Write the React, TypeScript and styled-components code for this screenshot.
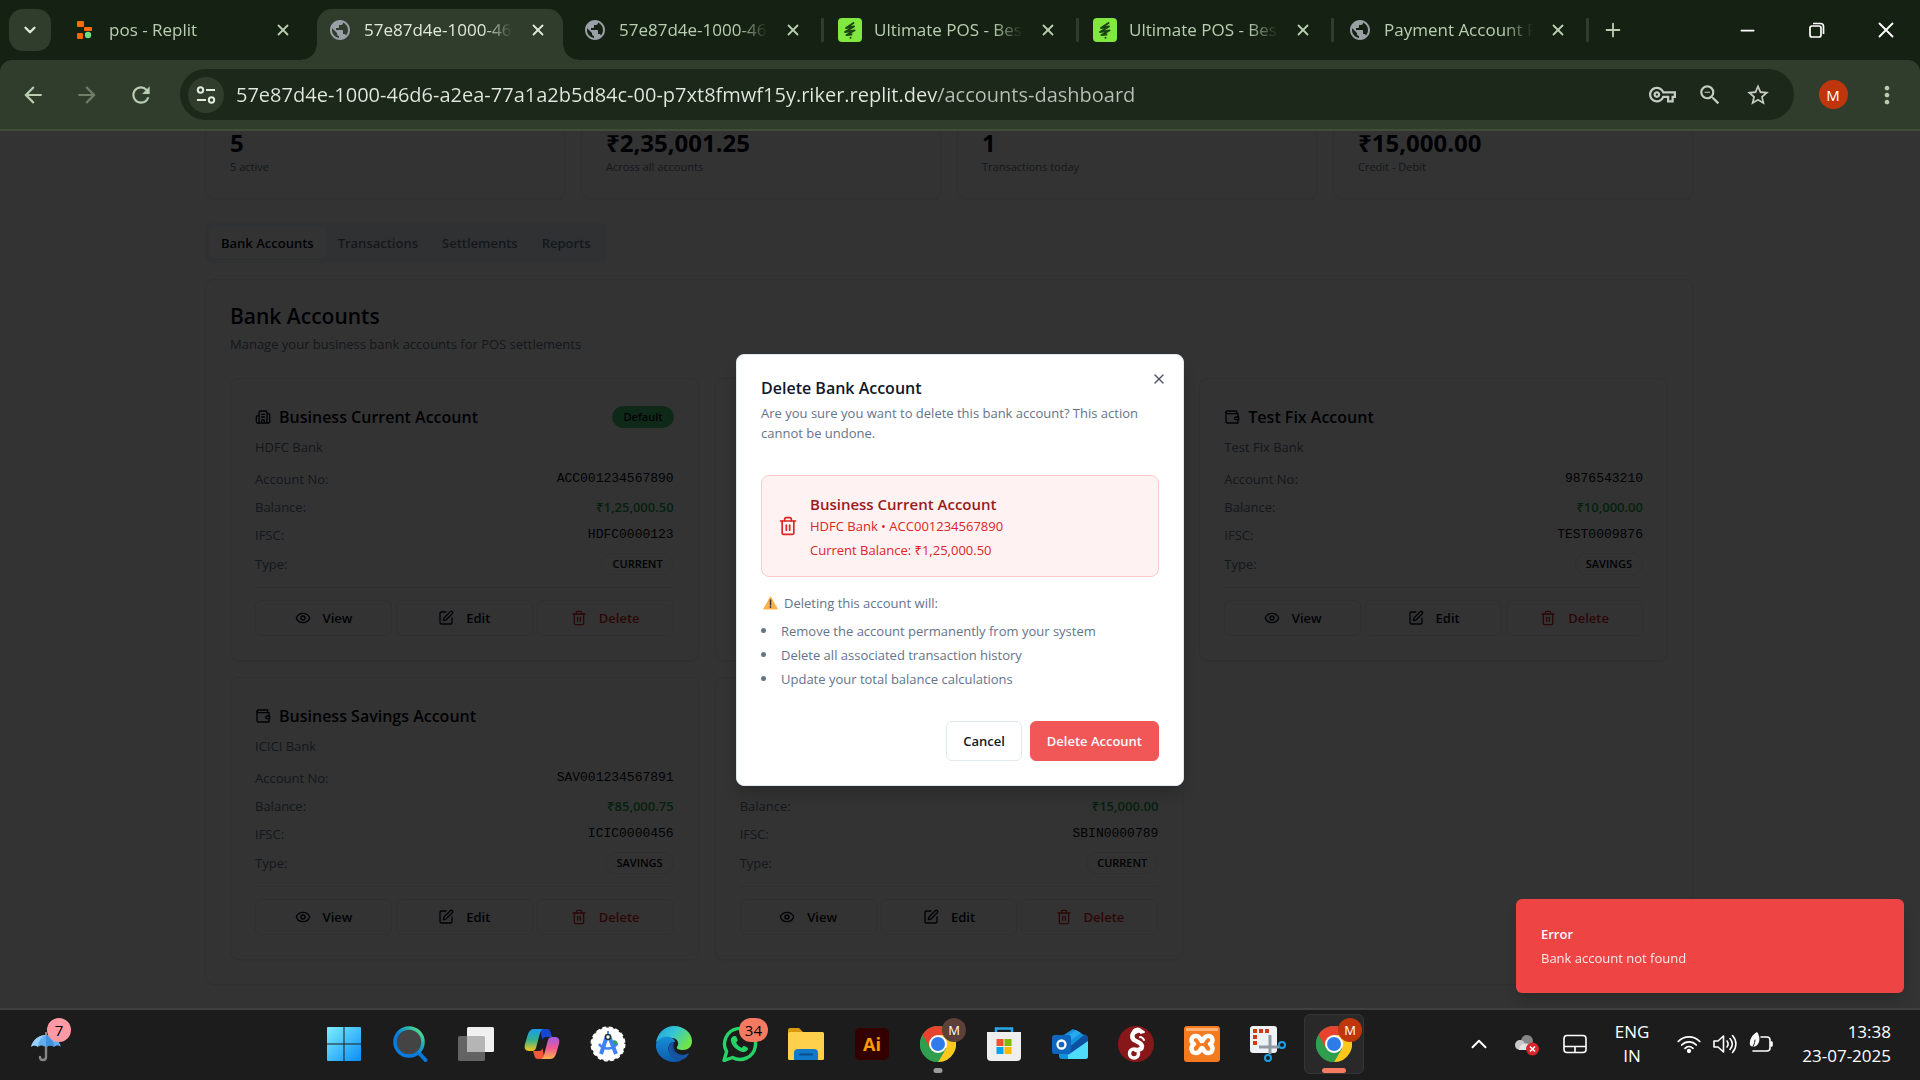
import React from 'react';
import styled, { createGlobalStyle } from 'styled-components';
import { Building2, ChevronDown, ChevronUp, Eye, Minus, Plus, SquarePen, Trash2, X } from 'lucide-react';
import {
  MdArrowBack,
  MdArrowForward,
  MdMoreVert,
  MdOutlineVpnKey,
  MdPublic,
  MdRefresh,
  MdStarBorder,
  MdOutlineZoomOut,
} from 'react-icons/md';

const sans = "'Open Sans', 'Noto Sans', sans-serif";
const mono = "'Liberation Mono', 'DejaVu Sans Mono', monospace";

const GlobalStyle = createGlobalStyle`
  *, *::before, *::after { box-sizing: border-box; }
  body { margin: 0; background: #152213; font-family: ${sans}; }
  h1, h2, h3, p, ul, dl, dd { margin: 0; padding: 0; }
  button { font-family: inherit; padding: 0; border: 0; background: none; cursor: pointer; color: inherit; }
  svg { display: block; flex-shrink: 0; }
`;

const Screen = styled.div`
  display: flex;
  flex-direction: column;
  height: 100vh;
  overflow: hidden;
`;

/* ---------- Browser chrome ---------- */

const TabStrip = styled.header`
  display: flex;
  align-items: center;
  height: 60px;
  flex-shrink: 0;
  padding-left: 9px;
  background: #152213;
  color: #b9ceb1;
`;

const TabSearch = styled.button`
  display: grid;
  place-items: center;
  width: 42px;
  height: 42px;
  margin-right: 11px;
  border-radius: 14px;
  background: #303d2d;
  color: #e3ecdc;
`;

const TabList = styled.div`
  display: flex;
  align-items: center;
  align-self: stretch;
  gap: 3px;
`;

const Tab = styled.div<{ $active?: boolean }>`
  position: relative;
  display: flex;
  align-items: center;
  align-self: flex-end;
  gap: 12px;
  width: 246px;
  height: 51px;
  padding: 0 12px 9px 11px;
  border-radius: 15px 15px 0 0;
  background: ${(p) => (p.$active ? '#303d2d' : 'transparent')};
  color: ${(p) => (p.$active ? '#dfe9d8' : '#b9ceb1')};

  &::before,
  &::after {
    content: ${(p) => (p.$active ? "''" : 'none')};
    position: absolute;
    bottom: 0;
    width: 15px;
    height: 15px;
  }
  &::before {
    right: 100%;
    background: radial-gradient(circle at 0 0, transparent 14px, #303d2d 15px);
  }
  &::after {
    left: 100%;
    background: radial-gradient(circle at 100% 0, transparent 14px, #303d2d 15px);
  }
`;

const TabIcon = styled.span`
  display: grid;
  place-items: center;
  width: 24px;
  height: 24px;
  flex-shrink: 0;
  color: #9aa0a6;
`;

const TabTitle = styled.span`
  flex: 1;
  min-width: 0;
  overflow: hidden;
  white-space: nowrap;
  font-size: 17px;
  line-height: 26px;
  mask-image: linear-gradient(90deg, #000 80%, transparent 100%);
`;

const TabClose = styled.button`
  display: grid;
  place-items: center;
  width: 26px;
  height: 26px;
`;

const TabDivider = styled.span<{ $hidden?: boolean }>`
  width: 3px;
  height: 24px;
  border-radius: 1px;
  background: ${(p) => (p.$hidden ? 'transparent' : '#303d2d')};
`;

const NewTab = styled.button`
  display: grid;
  place-items: center;
  width: 48px;
  height: 42px;
`;

const WindowControls = styled.div`
  display: flex;
  align-self: stretch;
  margin-left: auto;
  color: #fff;
`;

const WindowButton = styled.button`
  display: grid;
  place-items: center;
  width: 69px;
`;

const Toolbar = styled.nav`
  display: flex;
  align-items: center;
  flex-shrink: 0;
  padding: 9px 6px;
  border-bottom: 2px solid #3d4e39;
  border-radius: 12px 12px 0 0;
  background: #303d2d;
  color: #b9ceb1;
`;

const ToolButton = styled.button<{ $dim?: boolean }>`
  display: grid;
  place-items: center;
  width: 54px;
  height: 40px;
  opacity: ${(p) => (p.$dim ? 0.45 : 1)};
`;

const Omnibox = styled.div`
  display: flex;
  align-items: center;
  flex: 1;
  height: 51px;
  margin: 0 12px;
  padding: 0 12px 0 8px;
  border-radius: 26px;
  background: #1c291a;
  color: #c6ccc2;
`;

const SiteInfo = styled.button`
  display: grid;
  place-items: center;
  width: 36px;
  height: 36px;
  margin-right: 12px;
  border-radius: 50%;
  background: #303d2d;
  color: #e3e9de;
`;

const Address = styled.input`
  flex: 1;
  min-width: 0;
  padding: 0;
  border: 0;
  outline: 0;
  font: 20px / 30px ${sans};
  color: #e3e9de;
  background: linear-gradient(90deg, #e3e9de 701px, #b9c0b5 701px);
  background-clip: text;
  -webkit-text-fill-color: transparent;
`;

const OmniButton = styled.button`
  display: grid;
  place-items: center;
  width: 48px;
  height: 40px;
`;

const Avatar = styled.span`
  display: grid;
  place-items: center;
  width: 29px;
  height: 29px;
  border-radius: 50%;
  background: #bf360c;
  color: #fff;
  font-size: 15px;
`;

/* ---------- Dashboard page ---------- */

const Viewport = styled.div`
  position: relative;
  flex: 1;
  min-height: 0;
  overflow: hidden;
  background: #fff;
`;

const Gutter = styled.div`
  padding-right: 22px;
`;

const Page = styled.main`
  max-width: 1536px;
  margin: 0 auto;
  padding: 0 24px;
  color: #020817;
`;

const Stats = styled.section`
  display: grid;
  grid-template-columns: repeat(4, 1fr);
  gap: 16px;
  margin-bottom: 24px;
`;

const StatCard = styled.div`
  padding: 0 24px 23px;
  border: 1px solid #e2e8f0;
  border-top: 0;
  border-radius: 0 0 8px 8px;
  box-shadow: 0 1px 2px rgba(0, 0, 0, 0.05);
`;

const StatValue = styled.p`
  margin-bottom: 4px;
  font-size: 24px;
  line-height: 24px;
  font-weight: 700;
`;

const StatNote = styled.p`
  font-size: 11px;
  line-height: 16px;
  color: #64748b;
`;

const Sections = styled.div`
  display: inline-flex;
  height: 40px;
  margin-bottom: 16px;
  padding: 4px;
  border-radius: 6px;
  background: #f1f5f9;
`;

const SectionTab = styled.button<{ $active?: boolean }>`
  padding: 0 12px;
  border-radius: 4px;
  font-size: 13px;
  font-weight: 600;
  color: ${(p) => (p.$active ? '#020817' : '#64748b')};
  background: ${(p) => (p.$active ? '#fff' : 'transparent')};
  box-shadow: ${(p) => (p.$active ? '0 1px 2px rgba(0, 0, 0, 0.05)' : 'none')};
`;

const Panel = styled.section`
  padding: 24px;
  border: 1px solid #e2e8f0;
  border-radius: 8px;
  box-shadow: 0 1px 2px rgba(0, 0, 0, 0.05);
`;

const PanelHeading = styled.h1`
  margin-bottom: 6px;
  font-size: 21px;
  line-height: 24px;
  font-weight: 600;
`;

const Muted = styled.p`
  font-size: 13px;
  line-height: 20px;
  color: #64748b;
`;

const Accounts = styled.div`
  display: grid;
  grid-template-columns: repeat(3, 1fr);
  gap: 16px;
  margin-top: 24px;
`;

const Card = styled.article`
  padding: 24px;
  border: 1px solid #e2e8f0;
  border-radius: 8px;
  box-shadow: 0 1px 2px rgba(0, 0, 0, 0.05);
`;

const CardTop = styled.div`
  display: flex;
  align-items: center;
  justify-content: space-between;
  margin-bottom: 6px;
`;

const CardTitle = styled.h2`
  display: flex;
  align-items: center;
  gap: 8px;
  font-size: 16px;
  line-height: 28px;
  font-weight: 600;
`;

const Badge = styled.span<{ $solid?: boolean }>`
  padding: 0 10px;
  border: 1px solid ${(p) => (p.$solid ? '#4ecb7c' : '#e2e8f0')};
  border-radius: 11px;
  background: ${(p) => (p.$solid ? '#4ecb7c' : 'transparent')};
  color: #020817;
  font-size: 11px;
  line-height: 20px;
  font-weight: 600;
`;

const Facts = styled.dl`
  display: grid;
  gap: 8px;
  margin-top: 12px;
  padding-bottom: 12px;
  border-bottom: 1px solid #e2e8f0;
`;

const Fact = styled.div`
  display: flex;
  align-items: center;
  justify-content: space-between;
  font-size: 13px;
  line-height: 20px;
`;

const FactName = styled.dt`
  color: #64748b;
`;

const Code = styled.dd`
  font-family: ${mono};
`;

const Money = styled.dd`
  color: #16a34a;
  font-weight: 600;
`;

const Kind = styled.dd`
  display: flex;
`;

const Actions = styled.div`
  display: flex;
  gap: 4px;
  margin-top: 12px;
`;

const Action = styled.button<{ $danger?: boolean }>`
  display: flex;
  align-items: center;
  justify-content: center;
  gap: 12px;
  flex: 1;
  height: 36px;
  border: 1px solid #e2e8f0;
  border-radius: 6px;
  font-size: 13px;
  font-weight: 600;
  color: ${(p) => (p.$danger ? '#dc2626' : '#020817')};
`;

/* ---------- Dialog and toast ---------- */

const Overlay = styled.div`
  position: absolute;
  inset: 0;
  display: grid;
  place-items: center;
  background: rgba(0, 0, 0, 0.8);
`;

const Dialog = styled.section`
  position: relative;
  width: 448px;
  padding: 24px;
  border: 1px solid #e2e8f0;
  border-radius: 8px;
  background: #fff;
  box-shadow: 0 10px 15px -3px rgba(0, 0, 0, 0.2);
  color: #64748b;
`;

const DialogTitle = styled.h2`
  margin-bottom: 6px;
  font-size: 16px;
  line-height: 18px;
  font-weight: 600;
  color: #0f172a;
`;

const DialogClose = styled.button`
  position: absolute;
  top: 16px;
  right: 16px;
  color: #4b5566;
`;

const Target = styled.div`
  display: flex;
  align-items: center;
  gap: 12px;
  margin: 32px 0 16px;
  padding: 16px;
  border: 1px solid #fecaca;
  border-radius: 8px;
  background: #fef2f2;
  color: #dc2626;
  font-size: 13px;
  line-height: 20px;
`;

const TargetName = styled.h3`
  font-size: 15px;
  line-height: 24px;
  font-weight: 600;
  color: #991b1b;
`;

const TargetBalance = styled.p`
  margin-top: 4px;
`;

const Warning = styled.p`
  display: flex;
  align-items: center;
  gap: 6px;
  padding-left: 2px;
  font-size: 13px;
  line-height: 20px;
`;

const Effects = styled.ul`
  display: grid;
  gap: 4px;
  margin-top: 8px;
  list-style: none;
  font-size: 13px;
  line-height: 20px;
`;

const Effect = styled.li`
  display: flex;
  align-items: center;
  gap: 15px;
  &::before {
    content: '';
    width: 5px;
    height: 5px;
    border-radius: 50%;
    background: currentColor;
  }
`;

const DialogFooter = styled.footer`
  display: flex;
  justify-content: flex-end;
  gap: 8px;
  margin-top: 32px;
`;

const DialogButton = styled.button<{ $danger?: boolean }>`
  height: 40px;
  padding: 0 16px;
  border: 1px solid ${(p) => (p.$danger ? '#f15757' : '#e2e8f0')};
  border-radius: 6px;
  background: ${(p) => (p.$danger ? '#f15757' : '#fff')};
  color: ${(p) => (p.$danger ? '#f8fafc' : '#0f172a')};
  font-size: 13px;
  font-weight: 600;
`;

const Toast = styled.aside`
  position: absolute;
  right: 16px;
  bottom: 15px;
  width: 388px;
  padding: 25px;
  border-radius: 6px;
  background: #ef4444;
  color: #f8fafc;
  box-shadow: 0 10px 15px -3px rgba(0, 0, 0, 0.2);
  font-size: 13px;
  line-height: 20px;
`;

const ToastTitle = styled.h3`
  margin-bottom: 4px;
  font-size: 13px;
  line-height: 20px;
  font-weight: 600;
`;

const ToastText = styled.p`
  opacity: 0.9;
`;

/* ---------- Taskbar ---------- */

const Taskbar = styled.footer`
  display: flex;
  flex-shrink: 0;
  height: 72px;
  padding-bottom: 2px;
  border-top: 2px solid #404040;
  background: #1c1c1c;
  color: #fff;
`;

const WeatherSlot = styled.div`
  display: flex;
  flex: 0 1 311px;
  padding-left: 22px;
`;

const AppButton = styled.button`
  position: relative;
  display: grid;
  place-items: center;
  width: 66px;
  height: 68px;
`;

const WeatherButton = styled(AppButton)`
  width: 48px;
`;

const ActiveTile = styled.span`
  position: absolute;
  inset: 4px 3px;
  border: 1px solid #353535;
  border-radius: 6px;
  background: #292929;
`;

const Glyph = styled.span`
  position: relative;
`;

const RunMark = styled.span<{ $active?: boolean }>`
  position: absolute;
  bottom: 5px;
  left: 50%;
  width: ${(p) => (p.$active ? '24px' : '9px')};
  height: 5px;
  border-radius: 3px;
  transform: translateX(-50%);
  background: ${(p) => (p.$active ? '#f47b62' : '#9a9a9a')};
`;

const Count = styled.span<{ $tone: string; $dark?: boolean; $wide?: boolean }>`
  position: absolute;
  top: -8px;
  right: -10px;
  min-width: 24px;
  height: 24px;
  padding: 0 ${(p) => (p.$wide ? '6px' : '0')};
  border-radius: 12px;
  background: ${(p) => p.$tone};
  color: ${(p) => (p.$dark ? '#fff' : '#000')};
  font-size: ${(p) => (p.$dark ? '13px' : '15px')};
  line-height: 24px;
  text-align: center;
`;

const Tray = styled.div`
  display: flex;
  margin-left: auto;
`;

const TrayButton = styled.button<{ $width: number }>`
  display: flex;
  align-items: center;
  justify-content: center;
  gap: 12px;
  width: ${(p) => p.$width}px;
  font-size: 17px;
  line-height: 24px;
`;

const Clock = styled.button`
  width: 135px;
  padding-right: 29px;
  text-align: right;
  white-space: nowrap;
  font-size: 17px;
  line-height: 24px;
`;

/* ---------- Drawings ---------- */

const WalletIcon = () => (
  <svg width="16" height="16" viewBox="0 0 24 24" fill="none" stroke="currentColor" strokeWidth="2" strokeLinecap="round" strokeLinejoin="round">
    <path d="M21 12V7H5a2 2 0 0 1 0-4h14v4" />
    <path d="M3 5v14a2 2 0 0 0 2 2h16v-5" />
    <path d="M18 12a2 2 0 0 0 0 4h4v-4Z" />
  </svg>
);

const ReplitLogo = () => (
  <svg width="18" height="18" viewBox="0 0 18 18">
    <rect x="1" y="0" width="7" height="6" rx="1" fill="#ff6b0a" />
    <rect x="8" y="6" width="8" height="4" rx="1" fill="#ff6b0a" />
    <rect x="1" y="12" width="6" height="6" rx="1" fill="#f60" />
    <circle cx="12" cy="14" r="3.2" fill="#6ddc82" />
  </svg>
);

const UltimateLogo = () => (
  <svg width="24" height="24" viewBox="0 0 24 24">
    <rect width="24" height="24" rx="4" fill="#82e83f" />
    <path d="M15.500 5 8 10l8-1.500L7 14l9.500-1.500L8.500 17l5-.5" fill="none" stroke="#1c4313" strokeWidth="2" strokeLinecap="round" strokeLinejoin="round" />
    <circle cx="12.500" cy="19.800" r="1" fill="#1c4313" />
  </svg>
);

const SiteSettingsIcon = () => (
  <svg width="22" height="22" viewBox="0 0 22 22" fill="none" stroke="currentColor" strokeWidth="2">
    <circle cx="5.500" cy="6" r="2.700" />
    <path d="M11 6h9M2 16h9" />
    <circle cx="16.500" cy="16" r="2.700" />
  </svg>
);

const RestoreIcon = () => (
  <svg width="16" height="16" viewBox="0 0 16 16" fill="none" stroke="currentColor" strokeWidth="1.700">
    <rect x="1" y="4" width="11" height="11" rx="2" />
    <path d="M4 1.500h7.500a3 3 0 0 1 3 3V12" />
  </svg>
);

const WarningIcon = () => (
  <svg width="15" height="14" viewBox="0 0 15 14">
    <path d="M7.500.8 14.300 13H.7z" fill="#ffb04d" stroke="#ffb04d" strokeLinejoin="round" />
    <path d="M7.500 4v5" stroke="#3b3440" strokeWidth="1.500" strokeLinecap="round" />
    <circle cx="7.500" cy="11" r=".9" fill="#3b3440" />
  </svg>
);

const Umbrella = () => (
  <svg width="30" height="36" viewBox="0 0 30 36">
    <path d="M15 17v14c0 4-6 4-6 0" fill="none" stroke="#858585" strokeWidth="2.400" strokeLinecap="round" />
    <path d="M0 21C2 13 8 9 15 9s13 4 15 12c-2-2-5-2-7 0-2-2-5-2-8 0-3-2-6-2-8 0-2-2-5-2-7 0z" fill="#62aef0" />
    <path d="M7 21c0-5 3-10 8-12-6 0-13 4-15 12 2-2 5-2 7 0z" fill="#9bd0fb" />
    <path d="M15 21c0-5 0-9 0-12 5 2 8 7 8 12-2-2-5-2-8 0z" fill="#3f92e2" />
    <path d="M15 6v3" stroke="#858585" strokeWidth="2" />
  </svg>
);

const StartLogo = () => (
  <svg width="36" height="36" viewBox="0 0 36 36">
    <defs>
      <linearGradient id="start" x1="0" y1="0" x2="1" y2="1">
        <stop offset="0" stopColor="#7deffc" />
        <stop offset="1" stopColor="#0a8df8" />
      </linearGradient>
    </defs>
    <path d="M2 1h15.500v16.500H1V2a1 1 0 0 1 1-1zM18.500 1H34a1 1 0 0 1 1 1v15.500H18.500zM1 18.500h16.500V35H2a1 1 0 0 1-1-1zM18.500 18.500H35V34a1 1 0 0 1-1 1H18.500z" fill="url(#start)" />
  </svg>
);

const SearchLogo = () => (
  <svg width="36" height="36" viewBox="0 0 36 36">
    <defs>
      <linearGradient id="search" x1="0" y1="1" x2="1" y2="0">
        <stop offset=".45" stopColor="#0a7bdc" />
        <stop offset=".7" stopColor="#23b0b5" />
        <stop offset="1" stopColor="#6cf07a" />
      </linearGradient>
    </defs>
    <path d="m26 26 7.500 8" stroke="#0a78d8" strokeWidth="4" strokeLinecap="round" />
    <circle cx="17" cy="16" r="14" fill="#444" stroke="url(#search)" strokeWidth="3.500" />
  </svg>
);

const TaskViewLogo = () => (
  <svg width="38" height="36" viewBox="0 0 38 36">
    <rect x="1" y="10" width="27" height="25" rx="1.500" fill="#636363" />
    <rect x="10" y="1" width="27" height="25" rx="1.500" fill="#f0f0f0" />
    <path d="M10 10h16.500a1.500 1.500 0 0 1 1.500 1.500V26H11.500a1.500 1.500 0 0 1-1.500-1.500z" fill="#b5b5b5" />
  </svg>
);

const CopilotLogo = () => (
  <svg width="36" height="36" viewBox="0 0 36 36">
    <defs>
      <linearGradient id="cpA" x1="0" y1="0" x2="0" y2="1">
        <stop offset="0" stopColor="#1d9bf0" />
        <stop offset=".5" stopColor="#33b28f" />
        <stop offset="1" stopColor="#f5c514" />
      </linearGradient>
      <linearGradient id="cpB" x1="0" y1="0" x2="0" y2="1">
        <stop offset="0" stopColor="#a45bea" />
        <stop offset=".5" stopColor="#ef5a92" />
        <stop offset="1" stopColor="#ffb04c" />
      </linearGradient>
    </defs>
    <path d="M14 3h9c2 0 3 1 3.500 3l1.500 5h-6c-2 0-3 1-3.500 3L16 4z" fill="#1746d1" />
    <path d="M9 25h6c2 0 3-1 3.500-3l2 11H14c-2 0-3-1-3.500-3z" fill="#f4573a" />
    <path d="M10 3h9c-2 1-2.500 2-3 4l-4 15c-.6 2-2 3-4 3H5c-4 0-5-3-4-7L4 8c1-3 3-5 6-5z" fill="url(#cpA)" />
    <path d="M26 33h-9c2-1 2.500-2 3-4l4-15c.6-2 2-3 4-3h3c4 0 5 3 4 7l-3 10c-1 3-3 5-6 5z" fill="url(#cpB)" />
  </svg>
);

const StudioLogo = () => (
  <svg width="36" height="36" viewBox="0 0 36 36">
    <circle cx="18" cy="18" r="16.500" fill="#fff" stroke="#fff" strokeWidth="2" strokeDasharray="4 2.500" />
    <path d="M21 15c4-2 7 0 7 4h-7z" fill="#2f9e57" />
    <path d="m17 10-6 18M19 10l7 18" stroke="#3f82f4" strokeWidth="4" />
    <path d="M9 18c4 6 13 6 18 0" fill="none" stroke="#3f82f4" strokeWidth="2.500" />
    <path d="M18 5v3" stroke="#4c8df6" strokeWidth="2" />
    <circle cx="18" cy="11" r="2.500" fill="#fff" stroke="#263238" strokeWidth="1.600" />
  </svg>
);

const EdgeLogo = () => (
  <svg width="36" height="36" viewBox="0 0 36 36">
    <defs>
      <linearGradient id="edgeTop" x1="0" y1="0" x2="1" y2=".5">
        <stop offset="0" stopColor="#1b9de2" />
        <stop offset=".5" stopColor="#35c6d4" />
        <stop offset="1" stopColor="#6ee34c" />
      </linearGradient>
      <linearGradient id="edgeLow" x1="0" y1="0" x2="0" y2="1">
        <stop offset="0" stopColor="#198fd9" />
        <stop offset="1" stopColor="#0c5cae" />
      </linearGradient>
    </defs>
    <path d="M0 17C1 7 9 0 18 0c10 0 18 7 18 15 0 6-4 9-9 9-4 0-7-1-6-3 3-4 0-9-5-9C9 11 3 13 0 17z" fill="url(#edgeTop)" />
    <path d="M0 18c2-6 9-9 14-7 3 1 5 3 5 5-5-1-8 5-6 10 2 6 8 9 14 8-3 1-6 2-9 2C8 36-1 28 0 18z" fill="url(#edgeLow)" />
    <path d="M17 16c-6 3-5 11 1 15 5 3 11 2 15-4-5 3-11 2-14-2-2-3-2-6-1-8z" fill="#124f9c" />
    <path d="M13 26c2 7 9 10 15 7 2-1 4-3 5-6-5 3-11 4-15 0-2-3-3-7-1-11-4 1-5 6-4 10z" fill="#1456a4" />
  </svg>
);

const WhatsAppLogo = () => (
  <svg width="36" height="36" viewBox="0 0 36 36">
    <path d="M2 34.500 4.600 25.700A15.500 15.500 0 1 1 10.500 31.500z" fill="none" stroke="#25d366" strokeWidth="3.400" strokeLinejoin="round" />
    <path d="M12.500 10c1 0 1.500 0 2 1l1.200 3c.3.8-1.200 2-1.600 2.600 1.200 2.500 3 4.200 5.700 5.300.7-.6 1.700-2.300 2.500-2l3 1.500c.8.400.8.800.6 1.700-.6 2.400-3 3.300-5 3-6-1.100-11-6-12-11-.4-2.600 1.300-5.100 3.600-5.100z" fill="#25d366" />
  </svg>
);

const FolderLogo = () => (
  <svg width="36" height="36" viewBox="0 0 36 36">
    <path d="M0 4a2 2 0 0 1 2-2h9l4 4v6H0z" fill="#d99a10" />
    <rect y="6" width="36" height="28" rx="1.500" fill="#ffd04c" />
    <path d="M6 34V27a4 4 0 0 1 4-4h16a4 4 0 0 1 4 4v7z" fill="#1279c9" />
    <path d="M12 28.500h12" stroke="#0a4d8c" strokeWidth="2" strokeLinecap="round" />
  </svg>
);

const AiTile = styled.span`
  display: grid;
  place-items: center;
  width: 34px;
  height: 32px;
  border-radius: 5px;
  background: #330000;
  color: #ff9a00;
  font-size: 18px;
  line-height: 32px;
  font-weight: 700;
`;

const ChromeLogo = () => (
  <svg width="36" height="36" viewBox="0 0 36 36">
    <circle cx="18" cy="18" r="18" fill="#2f9e4f" />
    <path d="M18 18 2.400 9A18 18 0 0 1 33.600 9z" fill="#e8432f" />
    <path d="M18 9h15.600A18 18 0 0 1 18 36l8-13.500z" fill="#fcc81c" />
    <path d="M2.400 9 10.200 22.500 18 18V9z" fill="#e8432f" />
    <path d="M2.400 9A18 18 0 0 0 18 36l7.800-13.500L18 18l-7.800 4.500z" fill="#2f9e4f" />
    <circle cx="18" cy="18" r="9" fill="#fff" />
    <circle cx="18" cy="18" r="7" fill="#2f7bea" />
  </svg>
);

const StoreLogo = () => (
  <svg width="36" height="36" viewBox="0 0 36 36">
    <path d="M10 8V2.500h16V8" fill="none" stroke="#29a9e8" strokeWidth="2.500" />
    <path d="M1 6h34v25a4 4 0 0 1-4 4H5a4 4 0 0 1-4-4z" fill="#eee" />
    <path fill="#f05133" d="M10.500 13h7v7h-7z" />
    <path fill="#7fba00" d="M18.500 13h7v7h-7z" />
    <path fill="#00a4ef" d="M10.500 21h7v7h-7z" />
    <path fill="#ffb900" d="M18.500 21h7v7h-7z" />
  </svg>
);

const OutlookLogo = () => (
  <svg width="36" height="36" viewBox="0 0 36 36">
    <path d="M7 12 21 3l15 8v19a3 3 0 0 1-3 3H10a3 3 0 0 1-3-3z" fill="#1592dc" />
    <path d="M10 14 24 4l5 3-17 12z" fill="#2aa8ee" />
    <path d="M14 24 33 8l3 3v5L20 27z" fill="#0f4fa2" />
    <path d="m36 15-20 14v4h17a3 3 0 0 0 3-3z" fill="#4fdcfa" />
    <rect y="9" width="19" height="19" rx="2.500" fill="#0e66bd" />
    <circle cx="9.500" cy="18.500" r="4" fill="none" stroke="#fff" strokeWidth="2.300" />
  </svg>
);

const WireGuardLogo = () => (
  <svg width="36" height="36" viewBox="0 0 36 36">
    <circle cx="18" cy="18" r="18" fill="#88171a" />
    <path d="M15 5c2-3 6-3 8-1l3 2-4 1" fill="#fff" stroke="#fff" strokeWidth="2" strokeLinejoin="round" />
    <path d="M19 5c-5 1-6 6-3 9 3 2 7 2 8 6 0 3-3 4-6 4" fill="none" stroke="#fff" strokeWidth="4.500" strokeLinecap="round" />
    <circle cx="16" cy="27.500" r="4.500" fill="none" stroke="#fff" strokeWidth="3.500" />
    <path d="M22 11c2 0 3 1 4 3" fill="none" stroke="#fff" strokeWidth="2" strokeLinecap="round" />
  </svg>
);

const XamppLogo = () => (
  <svg width="36" height="36" viewBox="0 0 36 36">
    <rect width="36" height="36" rx="3" fill="#f47a20" />
    <path d="M2 2h32v3H2z" fill="#fbb077" />
    <path d="M12 10c5 0 4 5 6 5s1-5 6-5 6 6 2 8c4 3 3 9-2 9s-4-5-6-5-1 5-6 5-6-6-2-9c-4-2-3-8 2-8z" fill="none" stroke="#fff" strokeWidth="4.500" strokeLinejoin="round" />
  </svg>
);

const SnipLogo = () => (
  <svg width="36" height="36" viewBox="0 0 36 36">
    <rect width="27" height="27" rx="3" fill="#eef2f6" />
    <path d="M3 5h17" stroke="#d13a12" strokeWidth="4" strokeDasharray="4 2" />
    <path d="M5 9v12" stroke="#d13a12" strokeWidth="4" strokeDasharray="4 2" />
    <path d="M20 9v19M9 21h20" stroke="#9199a3" strokeWidth="3" />
    <circle cx="32" cy="19" r="3" fill="none" stroke="#1ca0ea" strokeWidth="2" />
    <circle cx="18" cy="32" r="3" fill="none" stroke="#1ca0ea" strokeWidth="2" />
  </svg>
);

const CloudOff = () => (
  <svg width="24" height="24" viewBox="0 0 24 24">
    <circle cx="12" cy="9" r="6" fill="#868686" />
    <circle cx="5" cy="13" r="5" fill="#c9c9c9" />
    <path d="M4 18c0-6 8-9 13-4v4z" fill="#e4e4e4" />
    <circle cx="17.500" cy="17" r="6.500" fill="#d9252b" />
    <path d="m15 14.500 5 5m0-5-5 5" stroke="#fff" strokeWidth="1.600" />
  </svg>
);

const Touchpad = () => (
  <svg width="24" height="24" viewBox="0 0 24 24" fill="none" stroke="#fff" strokeWidth="1.600">
    <rect x="1" y="3.500" width="22" height="17" rx="3" />
    <path d="M1 14.500h22M12 14.500v6" />
  </svg>
);

const Wifi = () => (
  <svg width="24" height="24" viewBox="0 0 24 24" fill="none" stroke="#fff" strokeWidth="1.700" strokeLinecap="round">
    <path d="M1.200 9.500c6-6.300 15.600-6.300 21.600 0M4.700 13c4-4.300 10.600-4.300 14.600 0M8 16.300c2.300-2.300 5.700-2.300 8 0" />
    <circle cx="12" cy="19" r="1.300" fill="#fff" />
  </svg>
);

const Speaker = () => (
  <svg width="24" height="24" viewBox="0 0 24 24" fill="none" stroke="#fff" strokeWidth="1.600" strokeLinecap="round" strokeLinejoin="round">
    <path d="M1 9v6h4l5.500 5V4L5 9z" />
    <path d="M14 9c1.500 2 1.500 4 0 6M17 6.500c3 3.500 3 7.500 0 11M19.500 3.500c4.500 5 4.500 12 0 17" />
  </svg>
);

const Battery = () => (
  <svg width="24" height="24" viewBox="0 0 24 24" fill="none" stroke="#fff" strokeWidth="1.600" strokeLinecap="round">
    <path d="M12 5h6a3 3 0 0 1 3 3v8a3 3 0 0 1-3 3H4" />
    <path d="M22.500 10.500v3" strokeWidth="2.500" />
    <path d="M8 0C3 3 0 8 1 13c2 3 6 2 8-1s2-8-1-12z" fill="#fff" stroke="none" />
    <path d="M6 8c0 4-2 6-4 10" stroke="#1c1c1c" strokeWidth="1" />
  </svg>
);

/* ---------- Data ---------- */

type TabData = { icon: React.ReactNode; title: string; active?: boolean };

const globe = <MdPublic size={24} />;

const browserTabs: TabData[] = [
  { icon: <ReplitLogo />, title: 'pos - Replit' },
  { icon: globe, title: '57e87d4e-1000-46', active: true },
  { icon: globe, title: '57e87d4e-1000-46' },
  { icon: <UltimateLogo />, title: 'Ultimate POS - Bes' },
  { icon: <UltimateLogo />, title: 'Ultimate POS - Bes' },
  { icon: globe, title: 'Payment Account R' },
];

const stats = [
  ['5', '5 active'],
  ['₹2,35,001.25', 'Across all accounts'],
  ['1', 'Transactions today'],
  ['₹15,000.00', 'Credit - Debit'],
];

type Account = {
  name: string;
  bank: string;
  number: string;
  balance: string;
  ifsc: string;
  kind: 'CURRENT' | 'SAVINGS';
  main?: boolean;
};

const accounts: (Account | null)[] = [
  { name: 'Business Current Account', bank: 'HDFC Bank', number: 'ACC001234567890', balance: '₹1,25,000.50', ifsc: 'HDFC0000123', kind: 'CURRENT', main: true },
  null,
  { name: 'Test Fix Account', bank: 'Test Fix Bank', number: '9876543210', balance: '₹10,000.00', ifsc: 'TEST0009876', kind: 'SAVINGS' },
  { name: 'Business Savings Account', bank: 'ICICI Bank', number: 'SAV001234567891', balance: '₹85,000.75', ifsc: 'ICIC0000456', kind: 'SAVINGS' },
  { name: 'Petty Cash', bank: 'State Bank', number: 'CUR001234567892', balance: '₹15,000.00', ifsc: 'SBIN0000789', kind: 'CURRENT' },
];

type AppData = { label: string; logo: React.ReactNode; count?: string; tone?: string; dark?: boolean; run?: boolean; active?: boolean };

const apps: AppData[] = [
  { label: 'Start', logo: <StartLogo /> },
  { label: 'Search', logo: <SearchLogo /> },
  { label: 'Task view', logo: <TaskViewLogo /> },
  { label: 'Copilot', logo: <CopilotLogo /> },
  { label: 'Android Studio', logo: <StudioLogo /> },
  { label: 'Edge', logo: <EdgeLogo /> },
  { label: 'WhatsApp', logo: <WhatsAppLogo />, count: '34', tone: '#f47b62' },
  { label: 'File Explorer', logo: <FolderLogo /> },
  { label: 'Illustrator', logo: <AiTile>Ai</AiTile> },
  { label: 'Chrome', logo: <ChromeLogo />, count: 'M', tone: '#5d4037', dark: true, run: true },
  { label: 'Store', logo: <StoreLogo /> },
  { label: 'Outlook', logo: <OutlookLogo /> },
  { label: 'WireGuard', logo: <WireGuardLogo /> },
  { label: 'XAMPP', logo: <XamppLogo /> },
  { label: 'Snipping Tool', logo: <SnipLogo /> },
  { label: 'Chrome window', logo: <ChromeLogo />, count: 'M', tone: '#bf360c', dark: true, run: true, active: true },
];

/* ---------- Parts ---------- */

const AccountCard = ({ account }: { account: Account }) => (
  <Card>
    <CardTop>
      <CardTitle>
        {account.kind === 'CURRENT' ? <Building2 size={16} /> : <WalletIcon />}
        {account.name}
      </CardTitle>
      {account.main && <Badge $solid>Default</Badge>}
    </CardTop>
    <Muted>{account.bank}</Muted>
    <Facts>
      <Fact>
        <FactName>Account No:</FactName>
        <Code>{account.number}</Code>
      </Fact>
      <Fact>
        <FactName>Balance:</FactName>
        <Money>{account.balance}</Money>
      </Fact>
      <Fact>
        <FactName>IFSC:</FactName>
        <Code>{account.ifsc}</Code>
      </Fact>
      <Fact>
        <FactName>Type:</FactName>
        <Kind>
          <Badge>{account.kind}</Badge>
        </Kind>
      </Fact>
    </Facts>
    <Actions>
      <Action>
        <Eye size={16} />
        View
      </Action>
      <Action>
        <SquarePen size={16} />
        Edit
      </Action>
      <Action $danger>
        <Trash2 size={16} />
        Delete
      </Action>
    </Actions>
  </Card>
);

const Browser = () => (
  <>
    <TabStrip>
      <TabSearch aria-label="Search tabs">
        <ChevronDown size={18} strokeWidth={3} />
      </TabSearch>
      <TabList role="tablist">
        {browserTabs.map((tab, i) => (
          <React.Fragment key={i}>
            <Tab role="tab" aria-selected={!!tab.active} $active={tab.active}>
              <TabIcon>{tab.icon}</TabIcon>
              <TabTitle>{tab.title}</TabTitle>
              <TabClose aria-label="Close tab">
                <X size={18} strokeWidth={2.4} />
              </TabClose>
            </Tab>
            <TabDivider $hidden={i < 2} />
          </React.Fragment>
        ))}
      </TabList>
      <NewTab aria-label="New tab">
        <Plus size={22} />
      </NewTab>
      <WindowControls>
        <WindowButton aria-label="Minimize">
          <Minus size={21} />
        </WindowButton>
        <WindowButton aria-label="Restore">
          <RestoreIcon />
        </WindowButton>
        <WindowButton aria-label="Close">
          <X size={26} strokeWidth={1.7} />
        </WindowButton>
      </WindowControls>
    </TabStrip>
    <Toolbar>
      <ToolButton aria-label="Back">
        <MdArrowBack size={26} />
      </ToolButton>
      <ToolButton aria-label="Forward" $dim>
        <MdArrowForward size={26} />
      </ToolButton>
      <ToolButton aria-label="Reload">
        <MdRefresh size={26} />
      </ToolButton>
      <Omnibox>
        <SiteInfo aria-label="View site information">
          <SiteSettingsIcon />
        </SiteInfo>
        <Address
          aria-label="Address"
          defaultValue="57e87d4e-1000-46d6-a2ea-77a1a2b5d84c-00-p7xt8fmwf15y.riker.replit.dev/accounts-dashboard"
        />
        <OmniButton aria-label="Passwords">
          <MdOutlineVpnKey size={27} />
        </OmniButton>
        <OmniButton aria-label="Zoom">
          <MdOutlineZoomOut size={26} />
        </OmniButton>
        <OmniButton aria-label="Bookmark">
          <MdStarBorder size={26} />
        </OmniButton>
      </Omnibox>
      <ToolButton aria-label="Profile">
        <Avatar>M</Avatar>
      </ToolButton>
      <ToolButton aria-label="Menu">
        <MdMoreVert size={28} />
      </ToolButton>
    </Toolbar>
  </>
);

const DeleteDialog = () => (
  <Overlay>
    <Dialog role="dialog" aria-labelledby="dialog-title">
      <DialogTitle id="dialog-title">Delete Bank Account</DialogTitle>
      <Muted>Are you sure you want to delete this bank account? This action cannot be undone.</Muted>
      <DialogClose aria-label="Close">
        <X size={16} />
      </DialogClose>
      <Target>
        <Trash2 size={20} />
        <div>
          <TargetName>Business Current Account</TargetName>
          <p>HDFC Bank • ACC001234567890</p>
          <TargetBalance>Current Balance: ₹1,25,000.50</TargetBalance>
        </div>
      </Target>
      <Warning>
        <WarningIcon />
        Deleting this account will:
      </Warning>
      <Effects>
        <Effect>Remove the account permanently from your system</Effect>
        <Effect>Delete all associated transaction history</Effect>
        <Effect>Update your total balance calculations</Effect>
      </Effects>
      <DialogFooter>
        <DialogButton>Cancel</DialogButton>
        <DialogButton $danger>Delete Account</DialogButton>
      </DialogFooter>
    </Dialog>
  </Overlay>
);

const SystemBar = () => (
  <Taskbar>
    <WeatherSlot>
      <WeatherButton aria-label="Weather">
        <Glyph>
          <Umbrella />
          <Count $tone="#ff99a4">7</Count>
        </Glyph>
      </WeatherButton>
    </WeatherSlot>
    {apps.map((app) => (
      <AppButton key={app.label} aria-label={app.label}>
        {app.active && <ActiveTile />}
        <Glyph>
          {app.logo}
          {app.count && (
            <Count $tone={app.tone ?? '#f47b62'} $dark={app.dark} $wide={app.count.length > 1}>
              {app.count}
            </Count>
          )}
        </Glyph>
        {app.run && <RunMark $active={app.active} />}
      </AppButton>
    ))}
    <Tray>
      <TrayButton $width={48} aria-label="Hidden icons">
        <ChevronUp size={26} strokeWidth={1.8} />
      </TrayButton>
      <TrayButton $width={48} aria-label="OneDrive">
        <CloudOff />
      </TrayButton>
      <TrayButton $width={48} aria-label="Touchpad">
        <Touchpad />
      </TrayButton>
      <TrayButton $width={66}>
        <span>
          ENG
          <br />
          IN
        </span>
      </TrayButton>
      <TrayButton $width={120} aria-label="Quick settings">
        <Wifi />
        <Speaker />
        <Battery />
      </TrayButton>
      <Clock>
        13:38
        <br />
        23-07-2025
      </Clock>
    </Tray>
  </Taskbar>
);

export default function App() {
  return (
    <Screen>
      <GlobalStyle />
      <Browser />
      <Viewport>
        <Gutter>
          <Page>
            <Stats>
              {stats.map(([value, note]) => (
                <StatCard key={note}>
                  <StatValue>{value}</StatValue>
                  <StatNote>{note}</StatNote>
                </StatCard>
              ))}
            </Stats>
            <Sections>
              <SectionTab $active>Bank Accounts</SectionTab>
              <SectionTab>Transactions</SectionTab>
              <SectionTab>Settlements</SectionTab>
              <SectionTab>Reports</SectionTab>
            </Sections>
            <Panel>
              <PanelHeading>Bank Accounts</PanelHeading>
              <Muted>Manage your business bank accounts for POS settlements</Muted>
              <Accounts>
                {accounts.map((account, i) =>
                  account ? <AccountCard key={account.number} account={account} /> : <Card key={i} />,
                )}
              </Accounts>
            </Panel>
          </Page>
        </Gutter>
        <DeleteDialog />
        <Toast role="alert">
          <ToastTitle>Error</ToastTitle>
          <ToastText>Bank account not found</ToastText>
        </Toast>
      </Viewport>
      <SystemBar />
    </Screen>
  );
}
